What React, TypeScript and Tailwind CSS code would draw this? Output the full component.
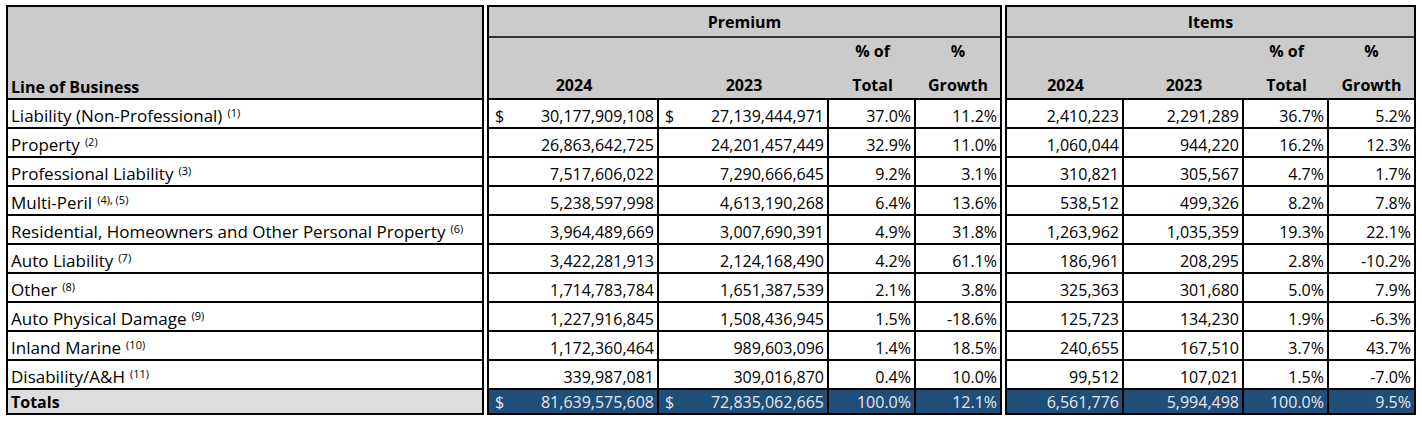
import React from "react";

type Row = {
  label: string;
  note: string;
  p24: string;
  p23: string;
  pTotal: string;
  pGrowth: string;
  i24: string;
  i23: string;
  iTotal: string;
  iGrowth: string;
  dollar?: boolean;
};

const rows: Row[] = [
  { label: "Liability (Non-Professional)", note: "(1)", p24: "30,177,909,108", p23: "27,139,444,971", pTotal: "37.0%", pGrowth: "11.2%", i24: "2,410,223", i23: "2,291,289", iTotal: "36.7%", iGrowth: "5.2%", dollar: true },
  { label: "Property", note: "(2)", p24: "26,863,642,725", p23: "24,201,457,449", pTotal: "32.9%", pGrowth: "11.0%", i24: "1,060,044", i23: "944,220", iTotal: "16.2%", iGrowth: "12.3%" },
  { label: "Professional Liability", note: "(3)", p24: "7,517,606,022", p23: "7,290,666,645", pTotal: "9.2%", pGrowth: "3.1%", i24: "310,821", i23: "305,567", iTotal: "4.7%", iGrowth: "1.7%" },
  { label: "Multi-Peril", note: "(4), (5)", p24: "5,238,597,998", p23: "4,613,190,268", pTotal: "6.4%", pGrowth: "13.6%", i24: "538,512", i23: "499,326", iTotal: "8.2%", iGrowth: "7.8%" },
  { label: "Residential, Homeowners and Other Personal Property", note: "(6)", p24: "3,964,489,669", p23: "3,007,690,391", pTotal: "4.9%", pGrowth: "31.8%", i24: "1,263,962", i23: "1,035,359", iTotal: "19.3%", iGrowth: "22.1%" },
  { label: "Auto Liability", note: "(7)", p24: "3,422,281,913", p23: "2,124,168,490", pTotal: "4.2%", pGrowth: "61.1%", i24: "186,961", i23: "208,295", iTotal: "2.8%", iGrowth: "-10.2%" },
  { label: "Other", note: "(8)", p24: "1,714,783,784", p23: "1,651,387,539", pTotal: "2.1%", pGrowth: "3.8%", i24: "325,363", i23: "301,680", iTotal: "5.0%", iGrowth: "7.9%" },
  { label: "Auto Physical Damage", note: "(9)", p24: "1,227,916,845", p23: "1,508,436,945", pTotal: "1.5%", pGrowth: "-18.6%", i24: "125,723", i23: "134,230", iTotal: "1.9%", iGrowth: "-6.3%" },
  { label: "Inland Marine", note: "(10)", p24: "1,172,360,464", p23: "989,603,096", pTotal: "1.4%", pGrowth: "18.5%", i24: "240,655", i23: "167,510", iTotal: "3.7%", iGrowth: "43.7%" },
  { label: "Disability/A&H", note: "(11)", p24: "339,987,081", p23: "309,016,870", pTotal: "0.4%", pGrowth: "10.0%", i24: "99,512", i23: "107,021", iTotal: "1.5%", iGrowth: "-7.0%" },
];

const totals = {
  p24: "81,639,575,608",
  p23: "72,835,062,665",
  pTotal: "100.0%",
  pGrowth: "12.1%",
  i24: "6,561,776",
  i23: "5,994,498",
  iTotal: "100.0%",
  iGrowth: "9.5%",
};

function Num({
  value,
  dollar,
  className,
}: {
  value: string;
  dollar?: boolean;
  className: string;
}) {
  return (
    <div
      className={`flex h-full items-end justify-between pb-0 pl-[6px] pr-[3px] leading-[22px] ${className}`}
    >
      <span>{dollar ? "$" : ""}</span>
      <span>{value}</span>
    </div>
  );
}

// Header column: optional upper line, lower line bottom aligned
function HeadCol({ top, bottom, className }: { top?: string; bottom: string; className: string }) {
  return (
    <div className={`flex flex-col items-center justify-end leading-[22px] ${className}`}>
      {top && <div className="mb-[12px]">{top}</div>}
      <div>{bottom}</div>
    </div>
  );
}

export default function App() {
  return (
    <div
      className="flex h-[422px] w-[1422px] gap-[3px] bg-white pl-[6px] pt-[5px] text-[16px] text-black"
      style={{ fontFamily: "'Open Sans', Lato, sans-serif" }}
    >
      {/* Line of Business */}
      <div className="flex h-[410px] w-[478px] flex-col border-2 border-black">
        <div className="flex h-[91px] items-end bg-[#cbcbcb] pl-[3px] font-bold leading-[22px]">
          Line of Business
        </div>
        {rows.map((r) => (
          <div
            key={r.label}
            className="flex h-[29px] items-end border-t-2 border-black pl-[3px] text-[17px] leading-[22px]"
          >
            <span>
              {r.label}
              <sup className="ml-[5px] text-[11px]">{r.note}</sup>
            </span>
          </div>
        ))}
        <div className="flex h-[25px] items-end border-t-2 border-black bg-[#dddddd] pl-[3px] font-bold leading-[22px]">
          Totals
        </div>
      </div>

      {/* Premium */}
      <div className="flex h-[410px] w-[515px] flex-col border-2 border-black">
        <div className="flex h-[91px] flex-col bg-[#cbcbcb] font-bold">
          <div className="flex h-[31px] items-center justify-center border-b-2 border-[#333]">
            Premium
          </div>
          <div className="flex h-[58px]">
            <HeadCol bottom="2024" className="w-[170px]" />
            <HeadCol bottom="2023" className="w-[170px]" />
            <HeadCol top="% of" bottom="Total" className="w-[87px]" />
            <HeadCol top="%" bottom="Growth" className="w-[84px]" />
          </div>
        </div>
        {rows.map((r) => (
          <div key={r.label} className="flex h-[29px] border-t-2 border-black">
            <Num value={r.p24} dollar={r.dollar} className="w-[170px] border-r-2 border-black" />
            <Num value={r.p23} dollar={r.dollar} className="w-[170px] border-r-2 border-black" />
            <Num value={r.pTotal} className="w-[87px] border-r-2 border-black" />
            <Num value={r.pGrowth} className="w-[84px]" />
          </div>
        ))}
        <div className="flex h-[25px] border-t-2 border-black bg-[#1f4e79] text-[#e8e8e8]">
          <Num value={totals.p24} dollar className="w-[170px] border-r-2 border-black" />
          <Num value={totals.p23} dollar className="w-[170px] border-r-2 border-black" />
          <Num value={totals.pTotal} className="w-[87px] border-r-2 border-black" />
          <Num value={totals.pGrowth} className="w-[84px]" />
        </div>
      </div>

      {/* Items */}
      <div className="flex h-[410px] w-[411px] flex-col border-2 border-black">
        <div className="flex h-[91px] flex-col bg-[#cbcbcb] font-bold">
          <div className="flex h-[31px] items-center justify-center border-b-2 border-[#333]">
            Items
          </div>
          <div className="flex h-[58px]">
            <HeadCol bottom="2024" className="w-[117px]" />
            <HeadCol bottom="2023" className="w-[120px]" />
            <HeadCol top="% of" bottom="Total" className="w-[85px]" />
            <HeadCol top="%" bottom="Growth" className="w-[85px]" />
          </div>
        </div>
        {rows.map((r) => (
          <div key={r.label} className="flex h-[29px] border-t-2 border-black">
            <Num value={r.i24} className="w-[117px] border-r-2 border-black" />
            <Num value={r.i23} className="w-[120px] border-r-2 border-black" />
            <Num value={r.iTotal} className="w-[85px] border-r-2 border-black" />
            <Num value={r.iGrowth} className="w-[85px]" />
          </div>
        ))}
        <div className="flex h-[25px] border-t-2 border-black bg-[#1f4e79] text-[#e8e8e8]">
          <Num value={totals.i24} className="w-[117px] border-r-2 border-black" />
          <Num value={totals.i23} className="w-[120px] border-r-2 border-black" />
          <Num value={totals.iTotal} className="w-[85px] border-r-2 border-black" />
          <Num value={totals.iGrowth} className="w-[85px]" />
        </div>
      </div>
    </div>
  );
}
